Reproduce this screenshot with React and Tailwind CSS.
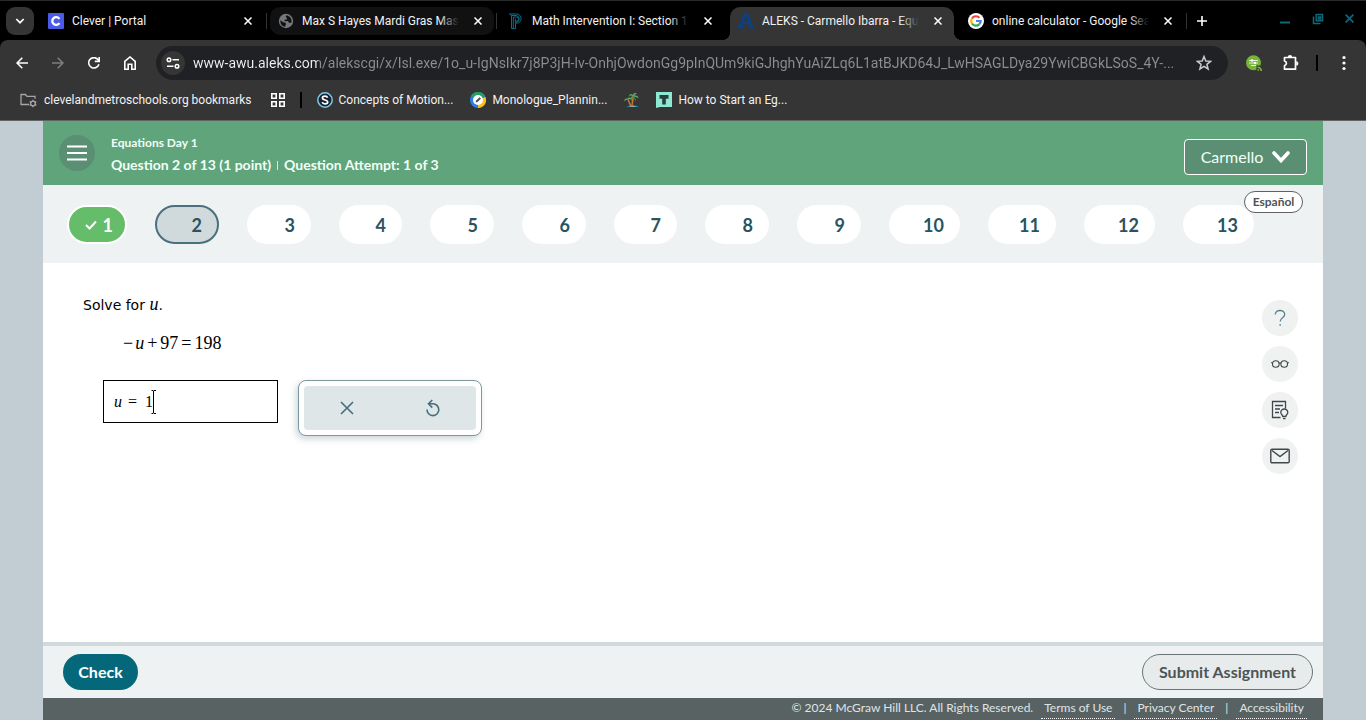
import React from "react";

const tabs = [
  { title: "Clever | Portal", icon: "clever" },
  { title: "Max S Hayes Mardi Gras Mas", icon: "globe", hover: true },
  { title: "Math Intervention I: Section 1", icon: "powerschool" },
  { title: "ALEKS - Carmello Ibarra - Equ", icon: "aleks", active: true },
  { title: "online calculator - Google Sea", icon: "google" },
];

const questions = [
  { n: 3, w: "w-16" },
  { n: 4, w: "w-[63px]" },
  { n: 5, w: "w-16" },
  { n: 6, w: "w-16" },
  { n: 7, w: "w-[63px]" },
  { n: 8, w: "w-16" },
  { n: 9, w: "w-16" },
  { n: 10, w: "w-[71px]" },
  { n: 11, w: "w-[68px]" },
  { n: 12, w: "w-[71px]" },
  { n: 13, w: "w-[71px]" },
];

function Favicon({ name }) {
  if (name === "clever")
    return (
      <svg viewBox="0 0 16 16" className="size-4 shrink-0">
        <rect width="16" height="16" rx="1" fill="#4a5be8" />
        <path d="M11.4 10.2A3.9 3.9 0 1 1 11.4 5.8" fill="none" stroke="#fff" strokeWidth="2.3" />
      </svg>
    );
  if (name === "globe")
    return (
      <svg viewBox="0 0 16 16" className="size-4 shrink-0">
        <circle cx="8" cy="8" r="7.2" fill="#75787b" />
        <path d="M2.4 7.2 5 9.2l2.2.3.8 1.6-1 2.6C4.3 13.4 2 11 2.4 7.2zM8.500 2.200l-.9 1.900 1.500.8-.5 1.600-2.300.4.600 1.300 3-.2 1.300 2 2.200-.6c.8-2.400-.6-6.200-4.900-7.200z" fill="#111" />
      </svg>
    );
  if (name === "powerschool")
    return (
      <svg viewBox="0 0 16 16" className="size-4 shrink-0" fill="none" stroke="#0a6f8c" strokeWidth="1">
        <path d="M1.500 1h7a4.600 4.600 0 0 1 0 9.200H7.500V15.500M3.500 2.500v13h1.800V4H8.500a2 2 0 0 1 0 4.200H7.300M1.500 1l2 1.500M5.300 15.500h2.200M3.500 2.500h5a3.500 3.500 0 0 1 0 6.800H7.300V5.500" />
      </svg>
    );
  if (name === "aleks")
    return (
      <svg viewBox="0 0 16 16" className="size-4 shrink-0">
        <path d="M5.600.5h4.800L15 13h1v2.500h-5.500V13h1l-.7-2H5.200l-.7 2h1v2.500H0V13h1zM6 8.500h4L8 3z" fill="#0d4080" />
      </svg>
    );
  return (
    <svg viewBox="0 0 16 16" className="size-4 shrink-0">
      <circle cx="8" cy="8" r="8" fill="#fff" />
      <g fill="none" strokeWidth="2.200">
        <path d="M4 5.500A4.700 4.700 0 0 1 11.400 4.700" stroke="#ea4335" />
        <path d="M4 10.500A4.700 4.700 0 0 1 4 5.500" stroke="#fbbc05" />
        <path d="M11.200 11.400A4.700 4.700 0 0 1 4 10.500" stroke="#34a853" />
        <path d="M8 8h4.700a4.700 4.700 0 0 1-1.500 3.400" stroke="#4285f4" />
      </g>
    </svg>
  );
}

function Cross({ className }) {
  return (
    <svg viewBox="0 0 8 8" className={className} fill="none" stroke="currentColor" strokeWidth="1.500">
      <path d="M.5.5l7 7M7.500.5l-7 7" />
    </svg>
  );
}

function Tab({ tab }) {
  const bg = tab.active
    ? "self-stretch mt-[6px] pb-[6px] rounded-t-[10px] bg-[#353535]"
    : tab.hover
      ? "h-7 rounded-[10px] bg-[#111111]"
      : "h-7";
  const fade = tab.active ? "to-[#353535]" : tab.hover ? "to-[#111111]" : "to-black";
  return (
    <div className={`relative mr-[6px] flex w-56 min-w-0 shrink items-center pl-2 pr-3 ${bg}`}>
      {tab.active && (
        <>
          <span className="absolute bottom-0 -left-2 size-2 bg-[radial-gradient(circle_at_0_0,transparent_8px,#353535_8px)]" />
          <span className="absolute bottom-0 -right-2 size-2 bg-[radial-gradient(circle_at_100%_0,transparent_8px,#353535_8px)]" />
        </>
      )}
      <Favicon name={tab.icon} />
      <div className="relative ml-2 min-w-0 flex-1 overflow-hidden whitespace-nowrap">
        {tab.title}
        <span className={`absolute inset-y-0 right-0 w-5 bg-linear-to-r from-transparent ${fade}`} />
      </div>
      <button type="button" aria-label={`Close ${tab.title}`} className="ml-[15px] shrink-0 text-white">
        <Cross className="size-2" />
      </button>
    </div>
  );
}

function Divider() {
  return <span className="-ml-[4px] mr-[3px] h-4 w-px shrink-0 bg-[#333333]" />;
}

function TabStrip() {
  return (
    <div className="flex h-10 items-center border-t border-[#2b2b2b] bg-black text-xs text-[#f1f1f1]">
      <button type="button" aria-label="Search tabs" className="ml-[6px] mr-[6px] flex size-7 shrink-0 items-center justify-center rounded-[9px] bg-[#353535]">
        <svg viewBox="0 0 10 10" className="size-[10px]" fill="none" stroke="#fff" strokeWidth="1.700">
          <path d="M1.300 3 5 6.700 8.700 3" />
        </svg>
      </button>
      <Tab tab={tabs[0]} />
      <Divider />
      <Tab tab={tabs[1]} />
      <Divider />
      <Tab tab={tabs[2]} />
      <Tab tab={tabs[3]} />
      <Tab tab={tabs[4]} />
      <Divider />
      <button type="button" aria-label="New tab" className="ml-[6px] shrink-0">
        <svg viewBox="0 0 12 12" className="size-3" fill="none" stroke="#fff" strokeWidth="1.600">
          <path d="M6 1v10M1 6h10" />
        </svg>
      </button>
      <div className="mb-1 ml-auto mr-3 flex shrink-0 items-center gap-[21px] text-[#0d6878]">
        <button type="button" aria-label="Minimize">
          <svg viewBox="0 0 12 12" className="size-3" fill="currentColor">
            <path d="M1 8.500h10v2H1z" />
          </svg>
        </button>
        <button type="button" aria-label="Restore">
          <svg viewBox="0 0 12 12" className="size-3" fill="none" stroke="currentColor" strokeWidth="1.500">
            <path d="M4.200 1.500h6.300v6.300H4.200zM1.500 3.500v7h7M6.500 4h2v2h-2z" />
          </svg>
        </button>
        <button type="button" aria-label="Close window">
          <Cross className="size-[9px]" />
        </button>
      </div>
    </div>
  );
}

function Toolbar() {
  return (
    <div className="flex h-[46px] items-center text-white">
      <div className="ml-4 flex shrink-0 items-center gap-6">
        <button type="button" aria-label="Back">
          <svg viewBox="0 0 12 12" className="size-3" fill="none" stroke="currentColor" strokeWidth="1.600">
            <path d="M12 6H1.200M6.300.8 1.100 6l5.200 5.200" />
          </svg>
        </button>
        <button type="button" aria-label="Forward" className="text-[#7d7d7d]">
          <svg viewBox="0 0 12 12" className="size-3" fill="none" stroke="currentColor" strokeWidth="1.600">
            <path d="M0 6h10.800M5.700.8 10.900 6l-5.200 5.200" />
          </svg>
        </button>
        <button type="button" aria-label="Reload">
          <svg viewBox="0 0 12 12" className="size-3" fill="none" stroke="currentColor" strokeWidth="1.600">
            <path d="M10.900 7.200A5.200 5.200 0 1 1 9.900 2.500L11 4M11.200 0v4.400H6.800" />
          </svg>
        </button>
        <button type="button" aria-label="Home">
          <svg viewBox="0 0 12 14" className="h-[14px] w-3" fill="none" stroke="currentColor" strokeWidth="1.600">
            <path d="M.8 5.300 6 1l5.200 4.300v7.900H7.800V8.300H4.200v4.900H.8z" />
          </svg>
        </button>
      </div>
      <div className="ml-5 flex h-[34px] min-w-0 flex-1 items-center rounded-full bg-[#202124] pl-[5px] pr-4">
        <button type="button" aria-label="View site information" className="flex size-6 shrink-0 items-center justify-center rounded-full bg-[#353535]">
          <svg viewBox="0 0 14 12" className="h-3 w-[14px]" fill="none" stroke="#fff" strokeWidth="1.500">
            <circle cx="3" cy="2.700" r="1.800" />
            <path d="M6.500 2.700H13M1 9.300h6.500" />
            <circle cx="11" cy="9.300" r="1.800" />
          </svg>
        </button>
        <input
          type="text"
          aria-label="Address bar"
          readOnly
          value="www-awu.aleks.com/alekscgi/x/Isl.exe/1o_u-IgNsIkr7j8P3jH-lv-OnhjOwdonGg9pInQUm9kiGJhghYuAiZLq6L1atBJKD64J_LwHSAGLDya29YwiCBGkLSoS_4Y-..."
          className="ml-2 mr-2 h-6 min-w-0 flex-1 bg-[linear-gradient(90deg,#f1f1f1_125px,#8c8e91_125px)] bg-clip-text text-sm text-transparent outline-none"
        />
        <button type="button" aria-label="Bookmark this tab" className="shrink-0">
          <svg viewBox="0 0 16 16" className="size-4" fill="none" stroke="#c8cacc" strokeWidth="1.500">
            <path d="M8 1.500 9.800 6l4.800.3-3.700 3 1.200 4.700L8 11.400 3.900 14l1.200-4.700-3.700-3L6.200 6z" />
          </svg>
        </button>
      </div>
      <div className="ml-[18px] mr-5 flex shrink-0 items-center">
        <button type="button" aria-label="Network extension">
          <svg viewBox="0 0 16 16" className="size-4">
            <circle cx="7.500" cy="7.800" r="7.500" fill="#78b43c" />
            <path d="M3 5.500h9M3 8h9M5 10.500h5" stroke="#e4f2d4" strokeWidth="1" />
            <circle cx="6" cy="5.500" r="1.200" fill="#fff" />
            <circle cx="9" cy="8" r="1.200" fill="#fff" />
            <path d="M10.500 16v-5.500H16V16z" fill="#353535" />
            <path d="M11.500 12.200a3.800 3.800 0 0 1 3.800 3.800M11.500 15h1.500" fill="none" stroke="#78b43c" strokeWidth="1.600" />
          </svg>
        </button>
        <button type="button" aria-label="Extensions" className="ml-5">
          <svg viewBox="0 0 18 18" className="size-[18px]" fill="none" stroke="currentColor" strokeWidth="1.700">
            <path d="M2.500 3.500h11v11.700h-11v-3.500a2.400 2.400 0 0 0 0-4.700z" strokeLinejoin="round" />
            <path d="M5.800 3.300a2.200 2.200 0 0 1 4.400 0zM14.200 7.200a2.200 2.200 0 0 1 0 4.400z" fill="currentColor" stroke="none" />
          </svg>
        </button>
        <span className="ml-4 h-4 w-[2px] bg-black" />
        <button type="button" aria-label="Browser menu" className="ml-6">
          <svg viewBox="0 0 4 16" className="h-4 w-1" fill="currentColor">
            <circle cx="2" cy="2.500" r="1.600" />
            <circle cx="2" cy="8" r="1.600" />
            <circle cx="2" cy="13.500" r="1.600" />
          </svg>
        </button>
      </div>
    </div>
  );
}

function Bookmarks() {
  return (
    <nav aria-label="Bookmarks" className="flex h-[34px] items-start pl-5 pt-[6px] text-xs text-[#f1f1f1]">
      <a href="#managed" className="flex h-4 items-center gap-[7px]">
        <svg viewBox="0 0 17 16" className="h-4 w-[17px]" fill="none" stroke="#a4a6a8" strokeWidth="1.300">
          <path d="M9 12.500H1V2.500h4.500L7 4.300h8v2.500" />
          <circle cx="13" cy="11.500" r="2.300" />
          <path d="M13 7.700v1.500M13 13.800v1.500M9.700 9.600l1.300.8M15 12.600l1.300.8M9.700 13.400l1.300-.8M15 10.400l1.300-.8" />
        </svg>
        clevelandmetroschools.org bookmarks
      </a>
      <button type="button" aria-label="Apps" className="ml-[19px] flex h-4 items-center">
        <svg viewBox="0 0 14 14" className="size-[14px]" fill="none" stroke="#fff" strokeWidth="1.600">
          <path d="M.8.8h4.400v4.400H.8zM8.800.8h4.400v4.400H8.800zM.8 8.800h4.400v4.400H.8zM8.800 8.800h4.400v4.400H8.800z" />
        </svg>
      </button>
      <span className="ml-[15px] h-4 w-[2px] bg-black" />
      <a href="#motion" className="ml-[15px] flex h-4 items-center gap-[6px]">
        <svg viewBox="0 0 16 16" className="size-4">
          <circle cx="8" cy="8" r="7.200" fill="#15242e" stroke="#7fc8e4" strokeWidth="1.500" />
          <path d="M10.600 5.800C10.200 4.600 9.100 4.200 8 4.200c-1.500 0-2.600.7-2.600 1.800C5.400 8.600 10.700 7.300 10.700 10c0 1.200-1.200 1.900-2.700 1.900-1.400 0-2.500-.6-2.800-1.800" fill="none" stroke="#fff" strokeWidth="1.700" />
        </svg>
        Concepts of Motion...
      </a>
      <a href="#monologue" className="ml-[17px] flex h-4 items-center gap-[6px]">
        <svg viewBox="0 0 16 16" className="size-4">
          <circle cx="8" cy="8" r="8" fill="#2b7de9" />
          <path d="M1 4A8 8 0 0 1 15 4L8 8z" fill="#23a05a" />
          <path d="M15.500 5A8 8 0 0 1 8 16V8z" fill="#fbc116" />
          <circle cx="8" cy="8" r="5" fill="#fff" />
          <path d="m5.600 10.600.6-2 3.300-3.400 1.500 1.400-3.400 3.400z" fill="#4b4f54" />
        </svg>
        Monologue_Plannin...
      </a>
      <a href="#island" aria-label="Island" className="ml-[17px] flex h-4 items-center">
        <svg viewBox="0 0 16 16" className="size-4">
          <path d="M2 15c2-1.500 4-.5 6-1 3-.8 5 0 7 1z" fill="#1b9ad6" />
          <path d="M5 14.500c2-1.200 5-1.200 7 0z" fill="#f0b860" />
          <path d="M7.800 14C8.500 10 9.200 8 9 4.500M6.500 14C6 11.500 5 10 4.200 8" fill="none" stroke="#c5783a" strokeWidth="1.500" />
          <path d="M9 4.500C7 3 6 3.500 5 5c0-3 2-4 4-2 .5-2.500 3-2.500 4-1-2 0-2 .5-2.500 1.500C13 3 14.500 4 14.500 6.500 12.500 4.500 11 5 9 4.500zM4.200 8C2.500 7.500 1.500 8 .5 9.500 0 7 1.500 6 3.500 6.500c1-1.500 3-1 3.500.5-1 0-2 0-2.800 1zM9 4.500c-1 1-2 2.500-1 4.500-2-1-2-3.500 0-4.800zM9.500 5c1.500.5 2.500 2 2 4.500C11 7.500 10.500 6.500 9.500 5z" fill="#58ad61" />
        </svg>
      </a>
      <a href="#start" className="ml-4 flex h-4 items-center gap-[6px]">
        <svg viewBox="0 0 16 16" className="size-4">
          <path d="M0 0h16v15H4l-4 1z" fill="#8ee8d2" />
          <path d="M3.500 3h9v3.800h-2.700V12.500H6.200V6.800H3.500z" fill="#26403d" />
        </svg>
        How to Start an Eg...
      </a>
    </nav>
  );
}

function QuestionNav() {
  return (
    <nav aria-label="Questions" className="flex justify-between bg-[#eef2f3] pb-[19px] pl-6 pr-5 font-bold text-[#2a5360]">
      <div className="flex gap-7 pt-5 text-lg">
        <button type="button" aria-label="Question 1, correct" className="flex h-[39px] w-[60px] items-center justify-end gap-[6px] rounded-full border-2 border-white bg-[#66bd69] pr-3 text-white">
          <svg viewBox="0 0 12 10" className="h-[10px] w-3" fill="none" stroke="currentColor" strokeWidth="2">
            <path d="m1 5 3.500 3.500L11 1.500" />
          </svg>
          1
        </button>
        <button type="button" className="h-[39px] w-16 rounded-full border-2 border-[#4a6f7d] bg-[#d0dadd] pr-[15px] text-right">
          2
        </button>
        {questions.map((q) => (
          <button key={q.n} type="button" className={`h-[39px] rounded-full bg-white pr-4 text-right ${q.w}`}>
            {q.n}
          </button>
        ))}
      </div>
      <div className="relative">
        <button type="button" className="absolute right-0 top-[6px] h-[22px] w-[59px] rounded-full border border-[#5b6366] bg-white text-xs leading-none text-[#4d5456]">
          Español
        </button>
      </div>
    </nav>
  );
}

function Keypad() {
  return (
    <div className="w-[184px] rounded-lg border border-[#7b999f] bg-white p-[5px] shadow-[-2px_3px_6px_rgba(90,120,130,0.3)]">
      <div className="grid h-11 grid-cols-2 rounded bg-[#dfe6e8] text-[#456e7d]">
        <button type="button" aria-label="Clear" className="flex items-center justify-center">
          <svg viewBox="0 0 14 14" className="size-[14px]" fill="none" stroke="currentColor" strokeWidth="1.600">
            <path d="m1 1 12 12M13 1 1 13" />
          </svg>
        </button>
        <button type="button" aria-label="Undo" className="flex items-center justify-center">
          <svg viewBox="0 0 14 18" className="h-[18px] w-[14px]" fill="none" stroke="currentColor" strokeWidth="1.600">
            <path d="M1 10.500a5.900 5.900 0 1 0 6-5.700H2.500M6.300 1 2.500 4.800l3.800 3.800" />
          </svg>
        </button>
      </div>
    </div>
  );
}

function SideTools() {
  const item = "flex size-9 items-center justify-center rounded-full bg-[#f0f2f2] text-[#3f484b]";
  return (
    <div className="flex flex-col gap-[10px]">
      <button type="button" aria-label="Help" className={item}>
        <svg viewBox="0 0 12 18" className="h-[18px] w-3 text-[#5a7f91]" fill="none" stroke="currentColor" strokeWidth="1.300">
          <path d="M1.300 5.500C1.300 2.800 3.300 1.500 6 1.500s4.700 1.500 4.700 4C10.700 9 6.200 8.500 6.200 12.500" />
          <path d="M5.400 15.300h1.500v1.500H5.400z" fill="currentColor" stroke="none" />
        </svg>
      </button>
      <button type="button" aria-label="Reading view" className={item}>
        <svg viewBox="0 0 18 10" className="h-[10px] w-[18px]" fill="none" stroke="currentColor" strokeWidth="1.100">
          <circle cx="4.800" cy="5" r="3.300" />
          <circle cx="13.200" cy="5" r="3.300" />
          <path d="M8 4.300c.5-.6 1.500-.6 2 0M0 3.800h1.800M16.200 3.800H18" />
        </svg>
      </button>
      <button type="button" aria-label="Explanation" className={item}>
        <svg viewBox="0 0 18 20" className="h-5 w-[18px]" fill="none" stroke="currentColor" strokeWidth="1.300">
          <path d="M9.500 17.500H1.500v-16h13v7M4 5.500h8M4 9h5M4 12.500h4" />
          <path d="M11.800 16.500c0-1.500-2-2-2-4a3.500 3.500 0 0 1 7 0c0 2-2 2.500-2 4zM12 18.700h2.500" />
        </svg>
      </button>
      <button type="button" aria-label="Message" className={item}>
        <svg viewBox="0 0 20 16" className="h-4 w-5" fill="none" stroke="currentColor" strokeWidth="1.400">
          <rect x=".8" y="1.200" width="18.400" height="13.600" rx="1.200" />
          <path d="m2 2.500 8 6 8-6" />
        </svg>
      </button>
    </div>
  );
}

export default function App() {
  return (
    <div className="flex min-h-screen flex-col bg-[#c1cdd3] font-[Lato,'Open_Sans',sans-serif]">
      <header className="bg-black font-[Roboto,sans-serif]">
        <TabStrip />
        <div className="rounded-t-lg border-b border-[#606562] bg-[#353535]">
          <Toolbar />
          <Bookmarks />
        </div>
      </header>

      <div className="mx-[43px] flex flex-1 flex-col bg-white">
        <div className="flex h-16 items-center bg-[#60a47c] text-[#f1fff6]">
          <button type="button" aria-label="Menu" className="ml-4 flex size-9 items-center justify-center rounded-full bg-[#5b8f73]">
            <svg viewBox="0 0 20 16" className="h-4 w-5" stroke="#fff" strokeWidth="2">
              <path d="M0 1.500h20M0 8h20M0 14.500h20" />
            </svg>
          </button>
          <div className="ml-4 mt-1 font-bold">
            <h1 className="text-xs leading-5">Equations Day 1</h1>
            <p className="flex items-center text-sm leading-6">
              Question 2 of 13 (1 point)
              <span className="mx-[6px] h-[9px] w-px bg-[#d5eedf]" />
              Question Attempt: 1 of 3
            </p>
          </div>
          <button type="button" className="ml-auto mr-4 mt-2 flex h-9 w-[123px] items-center justify-center gap-[9px] rounded border border-white bg-[#5b8f73]">
            Carmello
            <svg viewBox="0 0 18 12" className="h-3 w-[18px]" fill="none" stroke="#fff" strokeWidth="3.600" strokeLinecap="round">
              <path d="m2 2 7 7.500L16 2" />
            </svg>
          </button>
        </div>

        <QuestionNav />

        <main className="flex flex-1 justify-between pb-4 pl-10 pr-[25px] pt-[30px] text-black">
          <div>
            <p className="font-['DejaVu_Sans',sans-serif] text-sm leading-6">
              Solve for <i className="font-['Liberation_Serif',serif] text-lg leading-none">u</i>.
            </p>
            <p className="ml-10 mt-[14px] flex gap-[3px] font-['Liberation_Serif',serif] text-lg leading-6">
              <span className="flex gap-[2px]">
                <span>−</span>
                <i>u</i>
              </span>
              <span>+</span>
              <span>97</span>
              <span>=</span>
              <span>198</span>
            </p>
            <div className="ml-5 mt-[25px] flex items-start gap-5">
              <div className="relative flex h-[43px] w-[175px] items-center border border-black pl-[10px] font-['Liberation_Serif',serif] text-base">
                <label htmlFor="answer" className="flex gap-[6px]">
                  <i>u</i>
                  <span>=</span>
                </label>
                <input id="answer" type="text" defaultValue="1" className="ml-2 w-24 outline-none" />
                <svg viewBox="0 0 6 24" className="absolute left-[47px] top-[9px] h-6 w-[6px]" fill="none" stroke="#000">
                  <path d="M.5.5h1.500l.5 1 .5-1h2M2.500 1v22M.5 23.500h1.500l.5-1 .5 1h2" />
                </svg>
              </div>
              <Keypad />
            </div>
          </div>
          <div className="pt-[7px]">
            <SideTools />
          </div>
        </main>

        <div className="flex items-center justify-between border-t-4 border-[#d0dadd] bg-[#eef2f3] px-5 py-2 pr-[10px] font-bold">
          <button type="button" className="h-9 w-[75px] rounded-full bg-[#04687a] text-base text-white">
            Check
          </button>
          <button type="button" className="h-9 w-[171px] rounded-full border border-[#6a7375] bg-[#e8ebec] text-base text-[#4c5557]">
            Submit Assignment
          </button>
        </div>
        <footer className="flex h-[22px] items-start justify-end bg-[#596263] pr-4 text-xs leading-5 text-[#dfe5e6]">
          <span>© 2024 McGraw Hill LLC. All Rights Reserved.</span>
          <a href="#terms" className="ml-2 border-b border-dotted border-white px-[3px]">Terms of Use</a>
          <span className="mx-2">|</span>
          <a href="#privacy" className="border-b border-dotted border-white px-[3px]">Privacy Center</a>
          <span className="mx-2">|</span>
          <a href="#accessibility" className="border-b border-dotted border-white px-[3px]">Accessibility</a>
        </footer>
      </div>
    </div>
  );
}
